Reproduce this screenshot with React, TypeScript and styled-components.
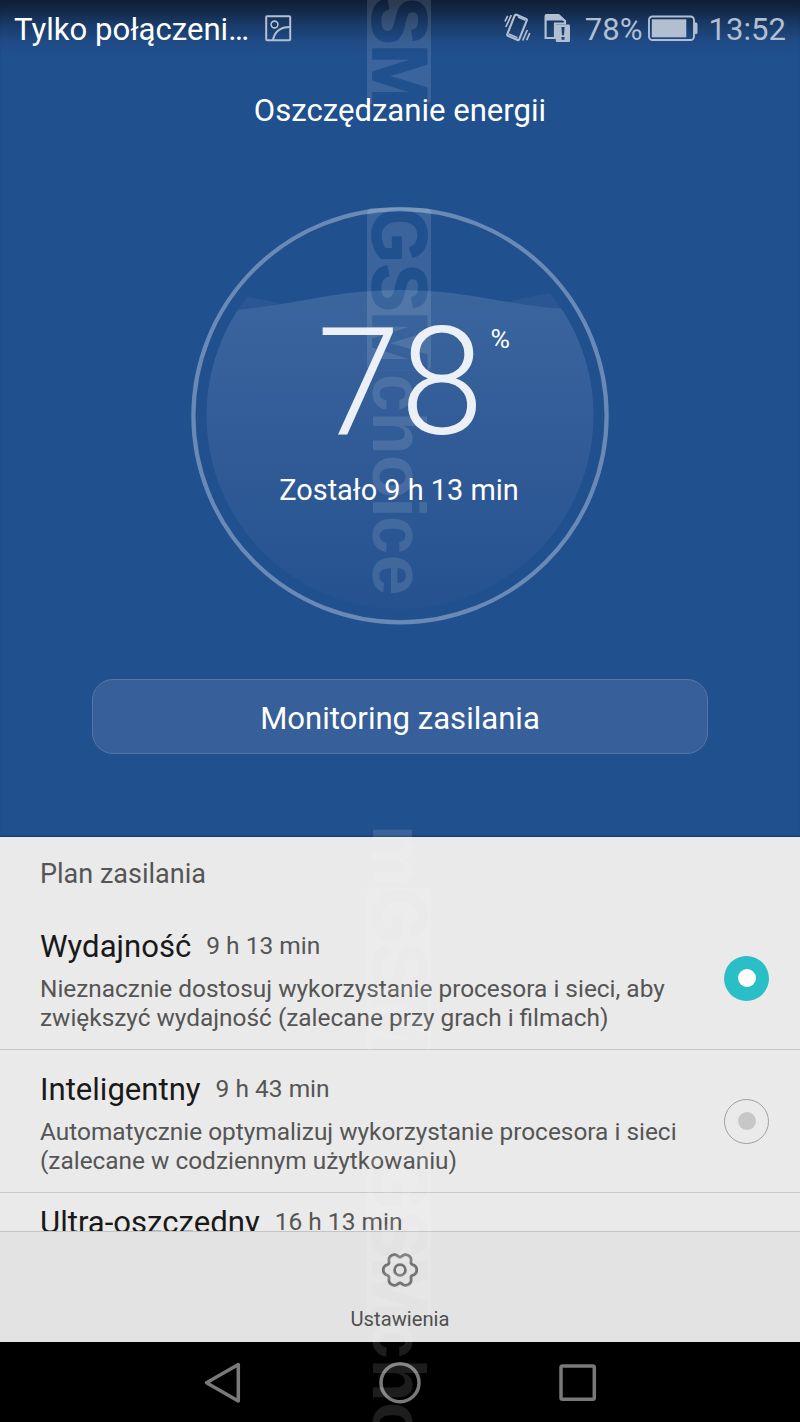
import React from "react";
import styled, { createGlobalStyle } from "styled-components";

const GlobalStyle = createGlobalStyle`
  *, *::before, *::after { box-sizing: border-box; }
  body { margin: 0; background: #000; font-family: Roboto, "Noto Sans", sans-serif; }
`;

const Screen = styled.div`
  position: relative;
  width: 800px;
  height: 1422px;
  overflow: hidden;
  display: flex;
  flex-direction: column;
`;

const Hero = styled.section`
  height: 837px;
  flex: none;
  display: flex;
  flex-direction: column;
  align-items: center;
  color: #fff;
  background: linear-gradient(#0f1f38 0, #11223c 5px, #193a67 24px, #1f4b86 42px, #20508e 58px, #20508e 100%);
  box-shadow: inset 0 -2px 2px -1px rgba(0, 20, 70, 0.45);
`;

const StatusBar = styled.header`
  width: 100%;
  height: 56px;
  padding: 4px 14px 0 14px;
  display: flex;
  align-items: center;
  font-size: 31.1px;
  line-height: 40px;

  svg { margin-bottom: 4px; }
`;

const Carrier = styled.span`
  white-space: nowrap;
  margin-right: 16px;
`;

const StatusIcons = styled.div`
  margin-left: auto;
  display: flex;
  align-items: center;
  color: #b2bfd1;
`;

const SimSlot = styled.span`
  display: flex;
  margin-left: 12px;
`;

const Percent = styled.span`
  margin: 0 5px 0 14px;
`;

const Clock = styled.span`
  margin-left: 11px;
`;

const Title = styled.h1`
  margin: 35px 0 0;
  font-size: 31.1px;
  font-weight: 400;
  line-height: 40px;
`;

const Gauge = styled.div`
  position: relative;
  width: 420px;
  height: 420px;
  margin-top: 75px;
  display: flex;
  flex-direction: column;
  align-items: center;
`;

const GaugeArt = styled.svg`
  position: absolute;
  inset: 0;
`;

const Level = styled.div`
  position: relative;
  display: flex;
  align-items: flex-start;
  margin: 107px 0 0 27px;
`;

const LevelValue = styled.span`
  font-size: 150px;
  line-height: 140px;
  font-weight: 300;
  color: #ebeff6;
`;

const LevelUnit = styled.span`
  font-size: 26.6px;
  line-height: 32px;
  margin: 10px 0 0 7px;
`;

const Remaining = styled.div`
  position: relative;
  margin: 17px 2px 0 0;
  font-size: 28.9px;
  line-height: 40px;
`;

const MonitorButton = styled.button`
  width: 616px;
  height: 75px;
  margin-top: 53px;
  padding: 3px 0 0;
  border: 1px solid #5475a6;
  border-radius: 21px;
  background: #375f99;
  color: #fff;
  font-family: inherit;
  font-size: 31.1px;
`;

const Plans = styled.main`
  height: 394px;
  flex: none;
  overflow: hidden;
  background: #eaeaea;
  color: #555;
`;

const PlansTitle = styled.h2`
  height: 70px;
  margin: 0;
  padding: 3px 40px 0;
  display: flex;
  align-items: center;
  font-size: 27px;
  font-weight: 400;
`;

const PlanRow = styled.article`
  height: 143px;
  padding: 0 31px 0 40px;
  display: flex;
  align-items: center;
  justify-content: space-between;
  border-bottom: 1px solid #c8c8c8;
`;

const PlanText = styled.div`
  height: 100%;
  padding-top: 22px;
`;

const PlanHeading = styled.div`
  display: flex;
  align-items: center;
  line-height: 36px;
`;

const PlanName = styled.h3`
  margin: 0 15px 0 0;
  font-size: 31.1px;
  font-weight: 400;
  color: #191919;
`;

const PlanTime = styled.span`
  margin-top: -1px;
  margin-bottom: 1px;
  font-size: 24.5px;
`;

const PlanDescription = styled.p`
  margin: 9px 0 0;
  font-size: 24.4px;
  line-height: 29px;
  white-space: pre-line;
`;

const Radio = styled.span<{ $on?: boolean }>`
  width: 45px;
  height: 45px;
  flex: none;
  border-radius: 50%;
  display: grid;
  place-items: center;
  border: ${(p) => (p.$on ? "none" : "1.5px solid #a0a0a0")};
  background: ${(p) => (p.$on ? "#2abfc7" : "transparent")};

  &::after {
    content: "";
    width: 18px;
    height: 18px;
    border-radius: 50%;
    background: ${(p) => (p.$on ? "#fff" : "#c7c7c7")};
  }
`;

const Footer = styled.footer`
  height: 111px;
  flex: none;
  display: flex;
  flex-direction: column;
  align-items: center;
  padding-top: 19px;
  border-top: 1px solid #c4c4c4;
  background: #e3e3e3;
  color: #4f4f4f;
  font-size: 20.2px;
  line-height: 24px;

  svg { margin-bottom: 18px; }
`;

const NavBar = styled.nav`
  height: 80px;
  flex: none;
  display: flex;
  align-items: center;
  justify-content: center;
  gap: 134px;
  background: #000;
`;

const WatermarkLayer = styled.svg`
  position: absolute;
  inset: 0;
  pointer-events: none;
`;

const PictureIcon = () => (
  <svg width="27" height="27" viewBox="0 0 27 27" fill="none" stroke="#b4c0d1" strokeWidth="2">
    <rect x="1.2" y="1.2" width="24" height="24" rx="1" />
    <circle cx="9.5" cy="9.5" r="3.4" strokeWidth="1.6" />
    <path d="M8 25C9.500 17.500 15 12 25 12" />
  </svg>
);

const VibrateIcon = () => (
  <svg width="27" height="30" viewBox="0 0 27 30" fill="none" stroke="currentColor" strokeWidth="2.1">
    <path d="M12.500 1.700 22.200 5.900Q23.200 6.400 22.800 7.400L15.200 26.300Q14.700 27.400 13.600 27L3.900 22.800Q2.800 22.200 3.300 21.100L10.700 2.500Q11.300 1.300 12.500 1.700Z" />
    <path d="M14 4 21.500 7.200M4.800 21 13.500 24.800" strokeWidth="1.500" />
    <path d="M.900 8.500 3.700 2.800M1.800 14 7.300 2.200M18.700 27.500 23.300 17M22.700 27.200 25.800 20" strokeWidth="1.700" />
  </svg>
);

const SimAlertIcon = () => (
  <svg width="28" height="30" viewBox="0 0 28 30">
    <path d="M2.600 9V25H12V10.500H22V8L15.500 2H4Q2.600 2 2.600 3.500Z" fill="none" stroke="currentColor" strokeWidth="2.200" />
    <path d="M2 7.500V2.500Q2 1 3.500 1H15.500L22.500 7.500Z" fill="currentColor" />
    <rect x="12.800" y="11.500" width="14.200" height="17.500" rx="1.200" fill="currentColor" />
    <path d="M18.400 14H21.600L21 22.200H19ZM18.500 23.900H21.500V26.700H18.500Z" fill="#1c4275" />
  </svg>
);

const BatteryIcon = () => (
  <svg width="50" height="26" viewBox="0 0 50 26">
    <rect x="1" y="1.500" width="45" height="23.500" rx="3.500" fill="none" stroke="currentColor" strokeWidth="1.900" />
    <rect x="3.800" y="4.300" width="34.500" height="18" fill="currentColor" />
    <path d="M46.500 7.500H48Q49.500 7.500 49.500 9V17.500Q49.500 19 48 19H46.500Z" fill="currentColor" />
  </svg>
);

const GaugeGraphic = () => (
  <GaugeArt viewBox="0 0 420 420">
    <defs>
      <clipPath id="tank"><circle cx="210" cy="209.500" r="193.500" /></clipPath>
      <linearGradient id="water" x1="0" y1="85" x2="0" y2="404" gradientUnits="userSpaceOnUse">
        <stop offset="0" stopColor="#3b659d" />
        <stop offset="0.5" stopColor="#305b97" />
        <stop offset="1" stopColor="#25528f" />
      </linearGradient>
    </defs>
    <g clipPath="url(#tank)">
      <path d="M0 88C80 84 95 110 210 114C300 111 310 87 420 81V190H0Z" fill="#2a5793" />
      <path d="M0 104H45C110 98.500 140 84.500 210 84C280 84.500 310 98.500 380 103.500H420V420H0Z" fill="url(#water)" />
    </g>
    <circle cx="210" cy="209.700" r="206.600" fill="none" stroke="#698ab6" strokeWidth="4.200" />
  </GaugeArt>
);

const gearPoints = Array.from({ length: 96 }, (_, i) => {
  const a = (i / 96) * Math.PI * 2;
  const wave = Math.cos(6 * a);
  const r = 15.2 + 1.9 * wave - 0.4 * Math.cos(12 * a);
  return `${(19 + r * Math.cos(a)).toFixed(2)},${(19 + r * Math.sin(a)).toFixed(2)}`;
}).join(" ");

const GearIcon = () => (
  <svg width="38" height="38" viewBox="0 0 38 38" fill="none" stroke="#737373" strokeWidth="2.800" strokeLinejoin="round">
    <polygon points={gearPoints} />
    <circle cx="19" cy="19" r="5.400" />
  </svg>
);

const Navigation = () => (
  <NavBar>
    <svg width="44" height="44" viewBox="0 0 44 44" fill="none" stroke="#797979" strokeWidth="3.500" strokeLinejoin="round">
      <path d="M38.300 4.500V41.100L6.500 22.800Z" />
    </svg>
    <svg width="44" height="44" viewBox="0 0 44 44" fill="none" stroke="#797979" strokeWidth="3.500">
      <circle cx="22" cy="22.700" r="19" />
    </svg>
    <svg width="44" height="44" viewBox="0 0 44 44" fill="none" stroke="#797979" strokeWidth="3.500">
      <rect x="5" y="6" width="33.300" height="33.300" rx="1.500" />
    </svg>
  </NavBar>
);

/* Each mark reads downwards; local x runs down the screen, local y towards the left. */
const marks = [
  { top: -59, m: false, choice: false },
  { top: 208, m: false, choice: true },
  { top: 888, m: true, choice: false },
  { top: 1155, m: false, choice: true },
];

/* letter, start and advance along the mark */
type Letter = [string, number, number];
const capitals: Letter[] = [["G", 0, 54.5], ["S", 56, 47.5], ["M", 103, 64]];
const smallLetters: Letter[] = [
  ["c", 166, 37.5], ["h", 203.5, 43], ["o", 247, 43.5], ["i", 289, 21], ["c", 308, 38], ["e", 346.5, 41],
];

const Letters = ({ letters, y }: { letters: Letter[]; y: number }) => (
  <>
    {letters.map(([letter, x, advance]) => (
      <text key={x} x={x} y={y} textLength={advance} lengthAdjust="spacingAndGlyphs">{letter}</text>
    ))}
  </>
);

const Watermark = () => (
  <WatermarkLayer viewBox="0 0 800 1422" fontFamily="Liberation Sans, sans-serif" fontWeight="700" fontSize="74" strokeLinejoin="round">
    <defs>
      <mask id="cut" maskUnits="userSpaceOnUse" x="0" y="-64" width="163" height="64">
        <rect x="0" y="-64" width="163" height="64" rx="5" fill="#fff" />
        <g fill="#000" stroke="#000" strokeWidth="1.800" fontSize="78">
          <Letters letters={capitals} y={-5.5} />
        </g>
      </mask>
    </defs>
    {marks.map((mark) => (
      <g key={mark.top} transform={`translate(367 ${mark.top}) rotate(90)`} fill="#fff" opacity="0.115">
        <rect x="0" y="-64" width="163" height="64" mask="url(#cut)" />
        {mark.m && <Letters letters={[["m", -63, 61]]} y={-6} />}
        {mark.choice && <Letters letters={smallLetters} y={-6} />}
      </g>
    ))}
  </WatermarkLayer>
);

const plans = [
  { name: "Wydajność", time: "9 h 13 min", on: true, text: "Nieznacznie dostosuj wykorzystanie procesora i sieci, aby\nzwiększyć wydajność (zalecane przy grach i filmach)" },
  { name: "Inteligentny", time: "9 h 43 min", on: false, text: "Automatycznie optymalizuj wykorzystanie procesora i sieci\n(zalecane w codziennym użytkowaniu)" },
];

const LastPlan = styled(PlanText)`
  padding: 12px 40px 0;
`;

export default function App() {
  return (
    <>
      <GlobalStyle />
      <Screen>
        <Hero>
          <StatusBar>
            <Carrier>Tylko połączeni…</Carrier>
            <PictureIcon />
            <StatusIcons>
              <VibrateIcon />
              <SimSlot><SimAlertIcon /></SimSlot>
              <Percent>78%</Percent>
              <BatteryIcon />
              <Clock>13:52</Clock>
            </StatusIcons>
          </StatusBar>
          <Title>Oszczędzanie energii</Title>
          <Gauge>
            <GaugeGraphic />
            <Level>
              <LevelValue>78</LevelValue>
              <LevelUnit>%</LevelUnit>
            </Level>
            <Remaining>Zostało 9 h 13 min</Remaining>
          </Gauge>
          <MonitorButton>Monitoring zasilania</MonitorButton>
        </Hero>
        <Plans>
          <PlansTitle>Plan zasilania</PlansTitle>
          {plans.map((plan) => (
            <PlanRow key={plan.name}>
              <PlanText>
                <PlanHeading>
                  <PlanName>{plan.name}</PlanName>
                  <PlanTime>{plan.time}</PlanTime>
                </PlanHeading>
                <PlanDescription>{plan.text}</PlanDescription>
              </PlanText>
              <Radio $on={plan.on} />
            </PlanRow>
          ))}
          <LastPlan>
            <PlanHeading>
              <PlanName>Ultra-oszczędny</PlanName>
              <PlanTime>16 h 13 min</PlanTime>
            </PlanHeading>
          </LastPlan>
        </Plans>
        <Footer>
          <GearIcon />
          Ustawienia
        </Footer>
        <Navigation />
        <Watermark />
      </Screen>
    </>
  );
}
